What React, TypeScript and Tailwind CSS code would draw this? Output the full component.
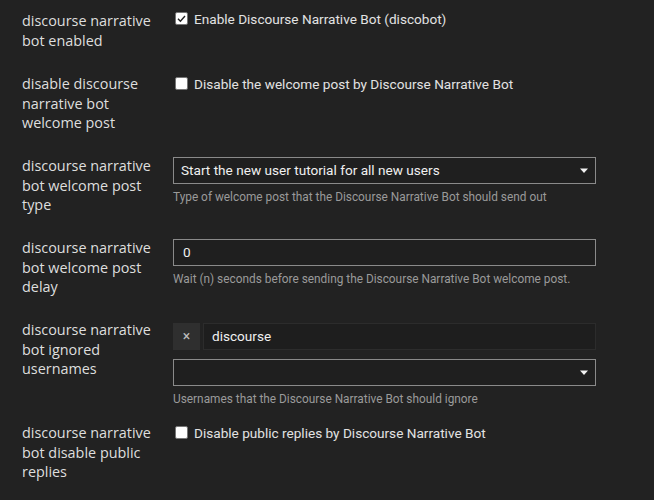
import React from "react";

const LABEL_FONT = { fontFamily: '"Open Sans", "DejaVu Sans", sans-serif' };

function Checkbox({ checked }: { checked?: boolean }) {
  return (
    <span className="mt-[3px] flex h-[13px] w-[13px] shrink-0 items-center justify-center rounded-[2px] border border-[#767676] bg-white">
      {checked && (
        <svg width="11" height="11" viewBox="0 0 11 11">
          <path d="M2 5.8 L4.4 8.2 L9 3" fill="none" stroke="#222" strokeWidth="1.4" />
        </svg>
      )}
    </span>
  );
}

function Caret() {
  return (
    <svg width="10" height="6" viewBox="0 0 10 6" className="shrink-0">
      <path d="M1 0.5 H9 L5 5 Z" fill="#f2f2f2" />
    </svg>
  );
}

function CheckRow({ checked, text }: { checked?: boolean; text: string }) {
  return (
    <label className="flex items-start gap-[6px] pl-[2px] text-[13.6px] leading-[20px] text-[#e2e2e2]">
      <Checkbox checked={checked} />
      <span>{text}</span>
    </label>
  );
}

function Select({ value }: { value?: string }) {
  return (
    <div className="flex h-[27px] items-center justify-between border border-[#8a8a8a] bg-[#1f1f1f] pl-[7px] pr-[6px] text-[13.6px] text-[#f0f0f0]">
      <span>{value}</span>
      <Caret />
    </div>
  );
}

function Desc({ children }: { children: React.ReactNode }) {
  return <div className="mt-[4px] text-[11.85px] leading-[18px] text-[#9a9a9a]">{children}</div>;
}

function Row({
  label,
  height,
  children,
}: {
  label: string[];
  height: string;
  children: React.ReactNode;
}) {
  return (
    <div className={`flex ${height}`}>
      <div style={LABEL_FONT} className="w-[151px] shrink-0 pr-2 text-[14.4px] leading-[19.5px] text-[#dedede]">
        {label.map((l) => (
          <div key={l}>{l}</div>
        ))}
      </div>
      <div className="w-[423px]">{children}</div>
    </div>
  );
}

export default function App() {
  return (
    <div
      className="h-[500px] w-[654px] overflow-hidden bg-[#222222] pl-[22px] pt-[11px]"
      style={{ fontFamily: 'Roboto, "Liberation Sans", sans-serif' }}
    >
      <Row label={["discourse narrative", "bot enabled"]} height="h-[63px]">
        <div className="-mt-[2px]">
          <CheckRow checked text="Enable Discourse Narrative Bot (discobot)" />
        </div>
      </Row>
      <Row label={["disable discourse", "narrative bot", "welcome post"]} height="h-[82px]">
        <CheckRow text="Disable the welcome post by Discourse Narrative Bot" />
      </Row>
      <Row label={["discourse narrative", "bot welcome post", "type"]} height="h-[82px]">
        <div className="pt-[1px]">
          <Select value="Start the new user tutorial for all new users" />
          <Desc>Type of welcome post that the Discourse Narrative Bot should send out</Desc>
        </div>
      </Row>
      <Row label={["discourse narrative", "bot welcome post", "delay"]} height="h-[82px]">
        <div className="pt-[1px]">
          <div className="flex h-[27px] items-center border border-[#8a8a8a] bg-[#1f1f1f] pl-[9px] text-[13.6px] text-[#f0f0f0]">
            0
          </div>
          <Desc>Wait (n) seconds before sending the Discourse Narrative Bot welcome post.</Desc>
        </div>
      </Row>
      <Row label={["discourse narrative", "bot ignored", "usernames"]} height="h-[103px]">
        <div className="pt-[3px]">
          <div className="flex h-[27px] gap-[3px]">
            <div className="flex w-[27px] items-center justify-center bg-[#2f2f2f] text-[14px] text-[#bdbdbd]">
              ×
            </div>
            <div className="flex flex-1 items-center border border-[#2c2c2c] bg-[#1e1e1e] pl-[8px] text-[13.6px] text-[#f0f0f0]">
              discourse
            </div>
          </div>
          <div className="mt-[9px]">
            <Select />
          </div>
          <Desc>Usernames that the Discourse Narrative Bot should ignore</Desc>
        </div>
      </Row>
      <Row label={["discourse narrative", "bot disable public", "replies"]} height="h-[82px]">
        <CheckRow text="Disable public replies by Discourse Narrative Bot" />
      </Row>
    </div>
  );
}
